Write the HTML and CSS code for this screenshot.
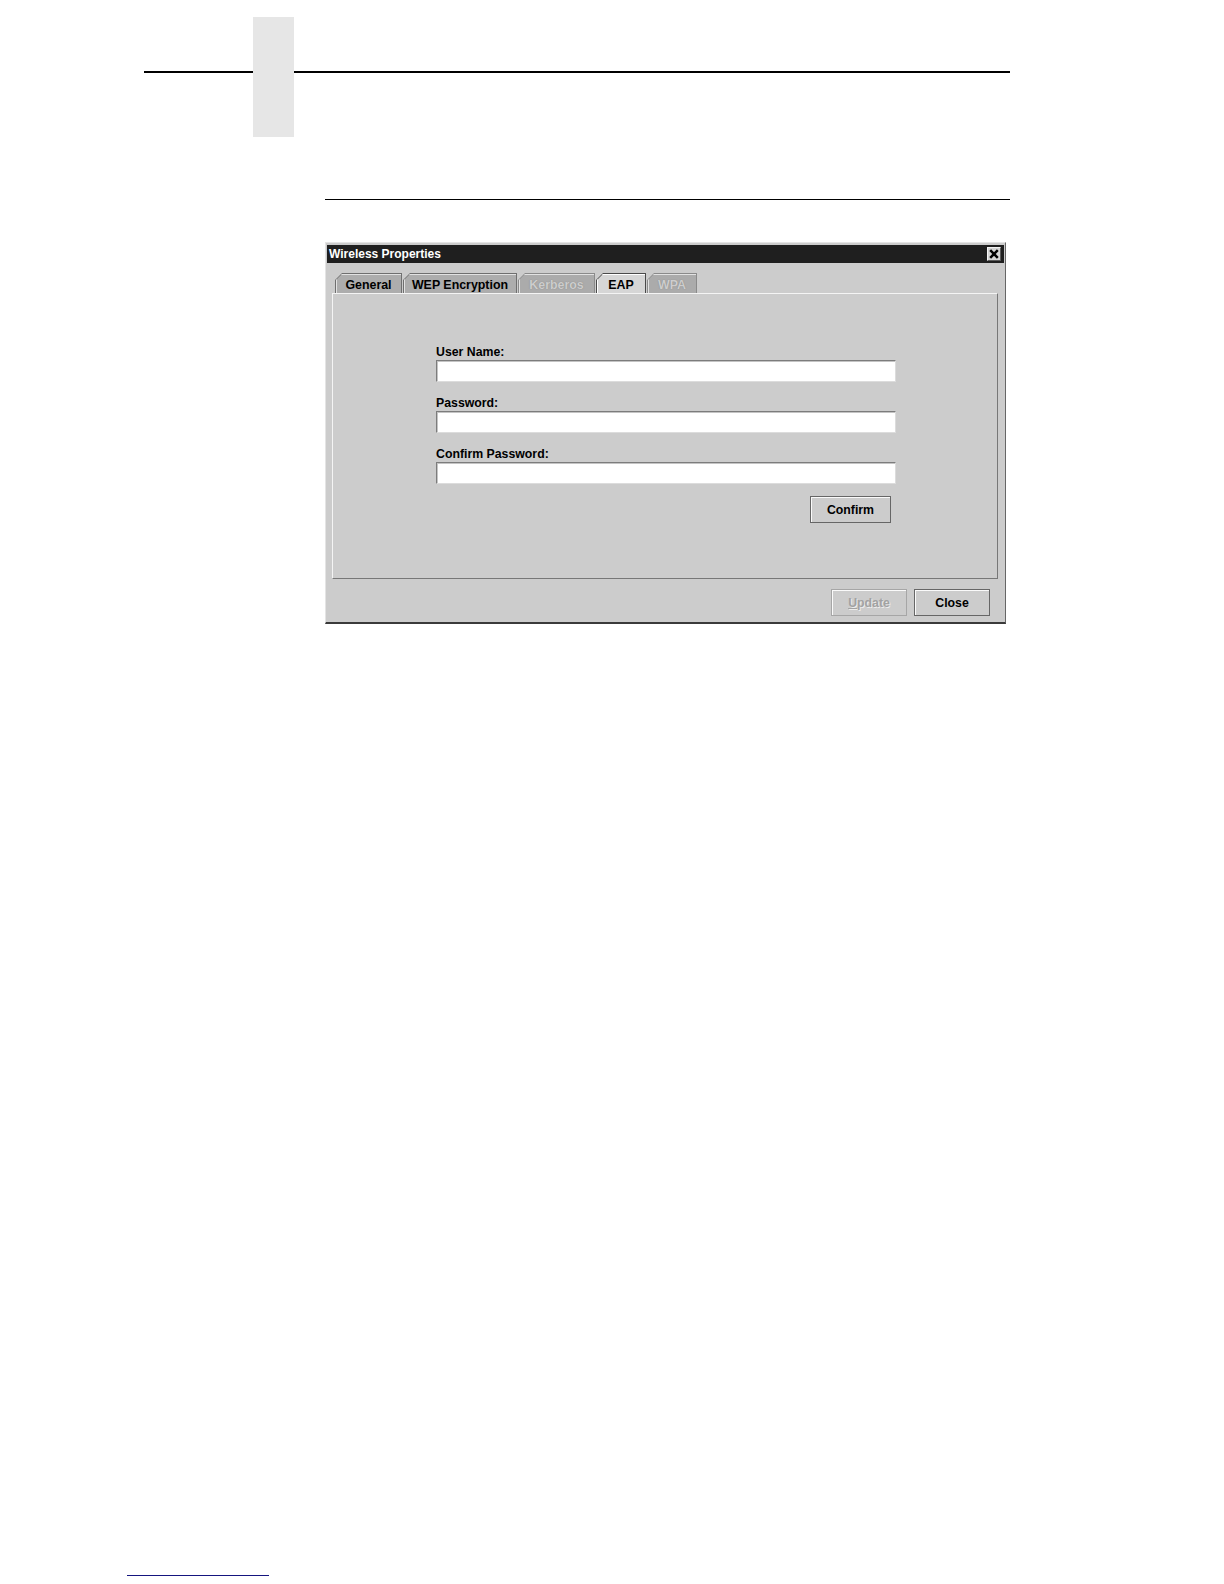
FILE: index.html
```html
<!DOCTYPE html>
<html lang="en">
<head>
<meta charset="utf-8">
<title>Wireless Properties</title>
<link rel="stylesheet" href="styles.css">
</head>
<body>
<div class="header">
  <div class="rule-seg seg-left"></div>
  <div class="thumb-tab"></div>
  <div class="rule-seg seg-right"></div>
</div>
<div class="section-rule"></div>

<div class="dialog">
  <div class="titlebar">
    <span class="title">Wireless Properties</span>
    <span class="close-box">
      <svg width="10" height="10" viewBox="0 0 10 10"><path d="M1.2 1.2 L8.8 8.8 M8.8 1.2 L1.2 8.8" stroke="#000" stroke-width="2.5" fill="none"/></svg>
    </span>
  </div>
  <div class="dialog-body">
    <div class="tabs">
      <div class="tab w-general"><span class="tab-in">General</span></div>
      <div class="tab w-wep"><span class="tab-in">WEP Encryption</span></div>
      <div class="tab w-kerb disabled"><span class="tab-in">Kerberos</span></div>
      <div class="tab w-eap selected"><span class="tab-in">EAP</span></div>
      <div class="tab w-wpa disabled"><span class="tab-in">WPA</span></div>
    </div>
    <div class="panel">
      <div class="form">
        <div class="label">User Name:</div>
        <div class="field"></div>
        <div class="label">Password:</div>
        <div class="field"></div>
        <div class="label">Confirm Password:</div>
        <div class="field last"></div>
        <div class="form-actions">
          <div class="btn btn-confirm">Confirm</div>
        </div>
      </div>
    </div>
    <div class="footer">
      <div class="btn btn-foot disabled-btn"><u>U</u>pdate</div>
      <div class="btn btn-foot">Close</div>
    </div>
  </div>
</div>

<div class="footer-rule"></div>
</body>
</html>
```

FILE: styles.css
```css
html, body {
  margin: 0;
  padding: 0;
  background: #ffffff;
}
body {
  font-family: "Liberation Sans", Arial, sans-serif;
  width: 1224px;
  height: 1584px;
  overflow: hidden;
}

/* page header */
.header {
  display: flex;
  align-items: flex-start;
  padding: 17px 0 0 144px;
}
.rule-seg {
  height: 2px;
  background: #000;
  margin-top: 54px;
}
.seg-left { width: 109px; }
.seg-right { width: 716px; }
.thumb-tab {
  width: 41px;
  height: 120px;
  background: #e6e6e6;
}
.section-rule {
  margin: 62px 0 0 325px;
  width: 685px;
  height: 1px;
  background: #000;
}

/* dialog */
.dialog {
  margin: 42px 0 0 325px;
  width: 681px;
  height: 382px;
  box-sizing: border-box;
  background: #cccccc;
  border-top: 1px solid #e4e4e4;
  border-left: 1px solid #e4e4e4;
  border-right: 1px solid #666;
  border-bottom: 2px solid #3a3a3a;
  padding: 2px 1px 1px 1px;
  display: flex;
  flex-direction: column;
}
.titlebar {
  height: 18px;
  flex: none;
  background: #1f1f1f;
  display: flex;
  align-items: center;
  justify-content: space-between;
  padding: 0 3px 0 2px;
}
.title {
  color: #fff;
  font-size: 12px;
  font-weight: bold;
  line-height: 18px;
}
.close-box {
  width: 14px;
  height: 14px;
  box-sizing: border-box;
  background: #d4d4d4;
  border: 1px solid;
  border-color: #f4f4f4 #5a5a5a #5a5a5a #f4f4f4;
  display: flex;
  align-items: center;
  justify-content: center;
}
.close-box svg { display: block; }

.dialog-body {
  padding: 10px 0 0 5px;
  display: flex;
  flex-direction: column;
  flex: 1;
}
.tabs {
  display: flex;
  gap: 1px;
  height: 20px;
  margin-left: 3px;
}
.tab {
  height: 20px;
  box-sizing: border-box;
  background: #6f6f6f;
  padding: 1px 1px 0 1px;
  clip-path: polygon(7px 0, 100% 0, 100% 100%, 0 100%, 0 7px);
  display: flex;
}
.tab-in {
  flex: 1;
  background: #adadad;
  clip-path: polygon(6px 0, 100% 0, 100% 100%, 0 100%, 0 6px);
  box-shadow: inset 1px 1px 0 #e2e2e2;
  font-size: 12.4px;
  font-weight: bold;
  color: #000;
  display: flex;
  align-items: center;
  justify-content: center;
  padding: 2px 0 0 0;
}
.w-general { width: 67px; }
.w-wep { width: 114px; }
.w-kerb { width: 77px; }
.w-eap { width: 50px; }
.w-wpa { width: 50px; }
.tab.selected { background: #4a4a4a; }
.tab.selected .tab-in { background: #d6d6d6; box-shadow: inset 1px 1px 0 #fff; }
.tab.disabled { background: #8a8a8a; }
.tab.disabled .tab-in {
  background: #ababab;
  color: #cdcdcd;
  text-shadow: 0 0 1px #7e7e7e;
}

.panel {
  width: 666px;
  height: 286px;
  flex: none;
  box-sizing: border-box;
  border-top: 1px solid #f4f4f4;
  border-left: 1px solid #f4f4f4;
  border-right: 1px solid #777;
  border-bottom: 1px solid #777;
  padding: 51px 0 0 103px;
}
.form {
  width: 460px;
  display: flex;
  flex-direction: column;
}
.label {
  font-size: 12.3px;
  font-weight: bold;
  line-height: 14px;
  height: 14px;
  margin-bottom: 1px;
  color: #000;
}
.field {
  height: 22px;
  box-sizing: border-box;
  background: #fff;
  border: 1px solid;
  border-color: #7c7c7c #dcdcdc #dcdcdc #7c7c7c;
  box-shadow: inset 1px 1px 0 #c4c4c4;
  margin-bottom: 14px;
}
.field.last { margin-bottom: 12px; }
.form-actions {
  display: flex;
  justify-content: flex-end;
  padding-right: 5px;
}
.btn {
  box-sizing: border-box;
  border: 1px solid #666;
  box-shadow: inset 1px 1px 0 #fafafa;
  background: #cccccc;
  font-size: 12.3px;
  font-weight: bold;
  color: #000;
  display: flex;
  align-items: center;
  justify-content: center;
}
.btn-confirm { width: 81px; height: 27px; }

.footer {
  display: flex;
  justify-content: flex-end;
  gap: 7px;
  padding: 10px 14px 0 0;
}
.btn-foot { width: 76px; height: 27px; }
.disabled-btn {
  border-color: #a6a6a6;
  color: #a2a2a2;
  text-shadow: 1px 1px 0 #ececec;
}
.disabled-btn u { text-decoration: underline; }

.footer-rule {
  margin: 951px 0 0 127px;
  width: 142px;
  height: 1px;
  background: #15157f;
}
```
